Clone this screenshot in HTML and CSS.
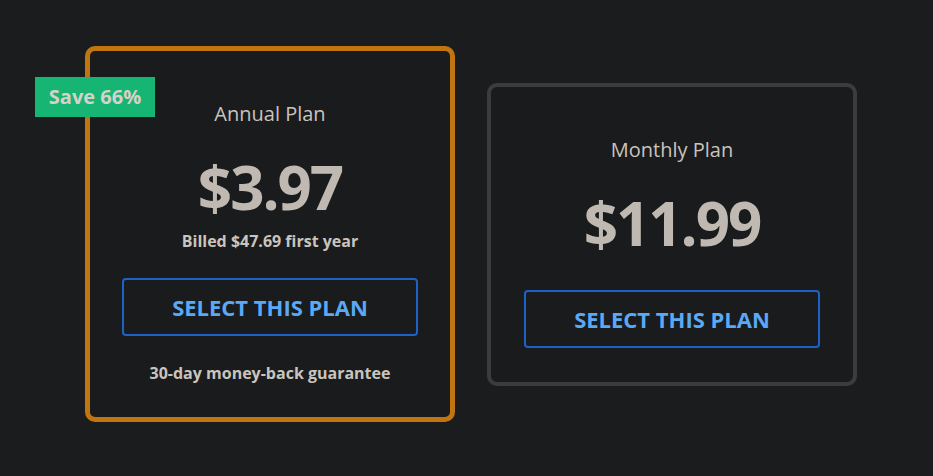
FILE: index.html
```html
<!DOCTYPE html>
<html>
<head>
<meta charset="utf-8">
<link rel="stylesheet" href="styles.css">
</head>
<body>
<div class="plans">
  <div class="card card-annual">
    <div class="badge">Save 66%</div>
    <div class="title">Annual Plan</div>
    <div class="price">$3.97</div>
    <div class="billed">Billed $47.69 first year</div>
    <button class="select">SELECT THIS PLAN</button>
    <div class="guarantee">30-day money-back guarantee</div>
  </div>
  <div class="card card-monthly">
    <div class="title">Monthly Plan</div>
    <div class="price price-monthly">$11.99</div>
    <button class="select">SELECT THIS PLAN</button>
  </div>
</div>
</body>
</html>
```
FILE: styles.css
```css
* { box-sizing: border-box; }
html, body {
  margin: 0;
  padding: 0;
  background: #1b1c1d;
  font-family: "Open Sans", "Noto Sans", sans-serif;
}
.plans {
  height: 476px;
  display: flex;
  align-items: center;
  gap: 32px;
  padding: 0 0 8px 85px;
}
.card {
  position: relative;
  width: 370px;
  border: 4px solid #3b3c3f;
  border-radius: 10px;
  background: #1a1b1c;
  padding: 50px 33px 34px;
  display: flex;
  flex-direction: column;
  align-items: center;
}
.card-annual {
  border: 5px solid #c07511;
  padding-bottom: 33px;
}
.badge {
  position: absolute;
  left: -55px;
  top: 26px;
  width: 120px;
  height: 40px;
  background: #16b574;
  color: #d6d1c9;
  font-weight: 700;
  font-size: 20px;
  line-height: 40px;
  text-align: center;
}
.title {
  font-size: 20px;
  font-weight: 500;
  line-height: 26px;
  color: #c9c4bd;
}
.price {
  margin-top: 28px;
  font-size: 60px;
  font-weight: 700;
  line-height: 64px;
  letter-spacing: -2px;
  color: #bfb9b1;
}
.price-monthly {
  margin-bottom: 35px;
}
.billed {
  margin-top: 11px;
  margin-bottom: 26px;
  font-size: 16px;
  font-weight: 700;
  line-height: 22px;
  color: #c9c4bd;
}
.select {
  width: 296px;
  height: 58px;
  background: transparent;
  border: 2px solid #1d62c8;
  border-radius: 4px;
  color: #5aa9f7;
  font-family: "Open Sans", "Noto Sans", sans-serif;
  font-weight: 700;
  font-size: 22px;
  padding: 0;
  cursor: pointer;
}
.guarantee {
  margin-top: 26px;
  font-size: 16px;
  font-weight: 700;
  line-height: 22px;
  color: #c9c4bd;
}
```
